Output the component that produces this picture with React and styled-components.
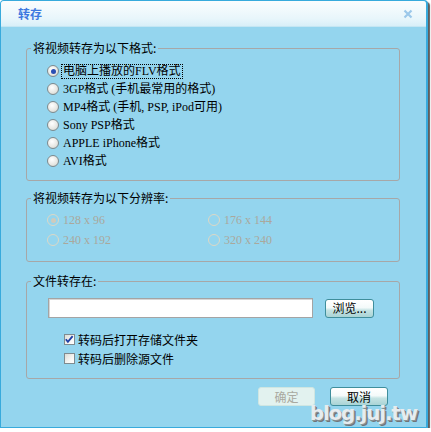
import React from "react";
import styled, { createGlobalStyle } from "styled-components";

const GlobalStyle = createGlobalStyle`
  html, body {
    margin: 0;
    padding: 0;
    background: #ffffff;
  }
  body {
    font-family: "Liberation Serif", "Noto Sans CJK SC", serif;
    font-size: 12px;
    color: #000;
  }
`;

const formats = [
  "电脑上播放的FLV格式",
  "3GP格式 (手机最常用的格式)",
  "MP4格式 (手机, PSP, iPod可用)",
  "Sony PSP格式",
  "APPLE iPhone格式",
  "AVI格式",
];

const sizes = ["128 x 96", "176 x 144", "240 x 192", "320 x 240"];

const App = () => {
  return (
    <>
      <GlobalStyle />
      <Window>
        <TitleBar>
          <Title>转存</Title>
          <Close viewBox="0 0 10 10">
            <path d="M1.5 1.5 L8.5 8.5 M8.5 1.5 L1.5 8.5" />
          </Close>
        </TitleBar>
        <Body>
          <Group>
            <Legend>将视频转存为以下格式:</Legend>
            <FormatList>
              {formats.map((f, i) => (
                <Option key={f}>
                  <Radio checked={i === 0} />
                  <OptionText focused={i === 0}>{f}</OptionText>
                </Option>
              ))}
            </FormatList>
          </Group>

          <Group space={10}>
            <Legend>将视频转存为以下分辨率:</Legend>
            <SizeGrid>
              {sizes.map((s, i) => (
                <SizeOption key={s}>
                  <Radio disabled checked={i === 0} />
                  <OptionText disabled>{s}</OptionText>
                </SizeOption>
              ))}
            </SizeGrid>
          </Group>

          <Group space={12}>
            <Legend>文件转存在:</Legend>
            <SaveBox>
              <PathRow>
                <PathInput />
                <Button width={49}>浏览...</Button>
              </PathRow>
              <CheckList>
                <CheckRow>
                  <Check checked>
                    <svg viewBox="0 0 11 11">
                      <path d="M2 5.2 L4.3 8 L9.5 1.8" />
                    </svg>
                  </Check>
                  <span>转码后打开存储文件夹</span>
                </CheckRow>
                <CheckRow>
                  <Check />
                  <span>转码后删除源文件</span>
                </CheckRow>
              </CheckList>
            </SaveBox>
          </Group>

          <Actions>
            <Button width={57} disabled>
              确定
            </Button>
            <Button width={58}>取消</Button>
          </Actions>
        </Body>
        <Watermark>blog.juj.tw</Watermark>
      </Window>
    </>
  );
};

export default App;

const Window = styled.div`
  position: relative;
  box-sizing: border-box;
  width: 428px;
  height: 428px;
  display: flex;
  flex-direction: column;
  background: #94d5ee;
  border: 1px solid #38aadc;
  border-right-width: 2px;
  border-radius: 4px 4px 0 0;
  box-shadow: 2px 2px 1px rgba(40, 40, 40, 0.75);
  overflow: visible;
`;

const TitleBar = styled.div`
  height: 25px;
  display: flex;
  align-items: center;
  justify-content: space-between;
  padding: 0 13px 0 17px;
  background: linear-gradient(#fbfdfe, #e8f6fb 70%, #d8eff8);
  border-bottom: 1px solid #c4e6f3;
  border-radius: 3px 3px 0 0;
`;

const Title = styled.span`
  font-family: "Noto Sans CJK SC", sans-serif;
  font-weight: 700;
  font-size: 12px;
  color: #3d78e0;
  line-height: 14px;
`;

const Close = styled.svg`
  width: 10px;
  height: 10px;
  path {
    stroke: #9cc8ea;
    stroke-width: 2.2;
    fill: none;
  }
`;

const Body = styled.div`
  flex: 1;
  padding: 14px 26px 0 25px;
  display: flex;
  flex-direction: column;
`;

const Group = styled.fieldset`
  margin: ${(p) => p.space || 0}px 0 0;
  padding: 0;
  min-width: 0;
  border: 1px solid #a7a7a7;
  border-radius: 3px;
`;

const Legend = styled.legend`
  margin-left: 4px;
  padding: 0 2px;
  font-family: "Noto Sans CJK SC", sans-serif;
  font-size: 12px;
  line-height: 14px;
  color: #000;
`;

const FormatList = styled.div`
  padding: 7px 0 10px 20px;
  display: flex;
  flex-direction: column;
`;

const Option = styled.div`
  height: 18px;
  display: flex;
  align-items: center;
  gap: 3px;
`;

const OptionText = styled.span`
  line-height: 13px;
  padding: 0 1px;
  white-space: nowrap;
  color: ${(p) => (p.disabled ? "#aaa89c" : "#000")};
  outline: ${(p) => (p.focused ? "1px dotted #000" : "none")};
`;

const Radio = styled.span`
  box-sizing: border-box;
  width: 12px;
  height: 12px;
  flex: none;
  border-radius: 50%;
  border: 1px solid ${(p) => (p.disabled ? "#dcd8c6" : "#7d8a8e")};
  background: ${(p) =>
    p.disabled
      ? "transparent"
      : "radial-gradient(circle at 40% 35%, #ffffff, #e6e6e2 60%, #c9c9c4)"};
  display: flex;
  align-items: center;
  justify-content: center;
  &::after {
    content: "";
    display: ${(p) => (p.checked ? "block" : "none")};
    width: 5px;
    height: 5px;
    border-radius: 50%;
    background: ${(p) => (p.disabled ? "#cfcbbd" : "#2a4fb4")};
  }
`;

const SizeGrid = styled.div`
  padding: 5px 0 11px 20px;
  display: grid;
  grid-template-columns: 161px 1fr;
  grid-auto-rows: 20px;
`;

const SizeOption = styled(Option)`
  height: 20px;
`;

const SaveBox = styled.div`
  padding: 10px 0 10px 21px;
  display: flex;
  flex-direction: column;
`;

const PathRow = styled.div`
  display: flex;
  align-items: center;
  gap: 12px;
`;

const PathInput = styled.div`
  box-sizing: border-box;
  width: 265px;
  height: 20px;
  background: #fff;
  border: 1px solid #a4a4a4;
  box-shadow: inset 1px 1px 0 #d6d6d6;
`;

const Button = styled.button`
  box-sizing: border-box;
  width: ${(p) => p.width}px;
  height: 19px;
  padding: 0;
  font-family: "Noto Sans CJK SC", sans-serif;
  font-size: 12px;
  line-height: 14px;
  color: ${(p) => (p.disabled ? "#a9a9a0" : "#000")};
  border: 1px solid ${(p) => (p.disabled ? "#cfe6e2" : "#3f8e9c")};
  border-radius: 3px;
  background: ${(p) =>
    p.disabled
      ? "#e2f2ef"
      : "linear-gradient(#ffffff, #f4fafa 45%, #c5e3e3 60%, #a9d4d6)"};
`;

const CheckList = styled.div`
  margin-top: 12px;
  padding-left: 16px;
  display: flex;
  flex-direction: column;
`;

const CheckRow = styled.div`
  height: 19px;
  display: flex;
  align-items: center;
  gap: 3px;
  font-family: "Noto Sans CJK SC", sans-serif;
  line-height: 14px;
`;

const Check = styled.span`
  box-sizing: border-box;
  width: 11px;
  height: 11px;
  flex: none;
  border: 1px solid #7f8b90;
  background: linear-gradient(135deg, #dcdcd6, #f6f6f4 60%, #ffffff);
  display: flex;
  svg {
    width: 11px;
    height: 11px;
    margin: -1px 0 0 -1px;
    display: ${(p) => (p.checked ? "block" : "none")};
  }
  path {
    fill: none;
    stroke: #1f3fa6;
    stroke-width: 2;
  }
`;

const Actions = styled.div`
  margin-top: 8px;
  padding-right: 12px;
  display: flex;
  justify-content: flex-end;
  gap: 15px;
`;

const Watermark = styled.div`
  position: absolute;
  right: 9px;
  bottom: 3px;
  font-family: "DejaVu Sans", sans-serif;
  font-weight: 700;
  font-size: 20px;
  letter-spacing: -1.2px;
  line-height: 22px;
  color: #e6ecef;
  text-shadow: 1px 1px 0 #8b9296, 2px 2px 0 #6f7579;
`;
